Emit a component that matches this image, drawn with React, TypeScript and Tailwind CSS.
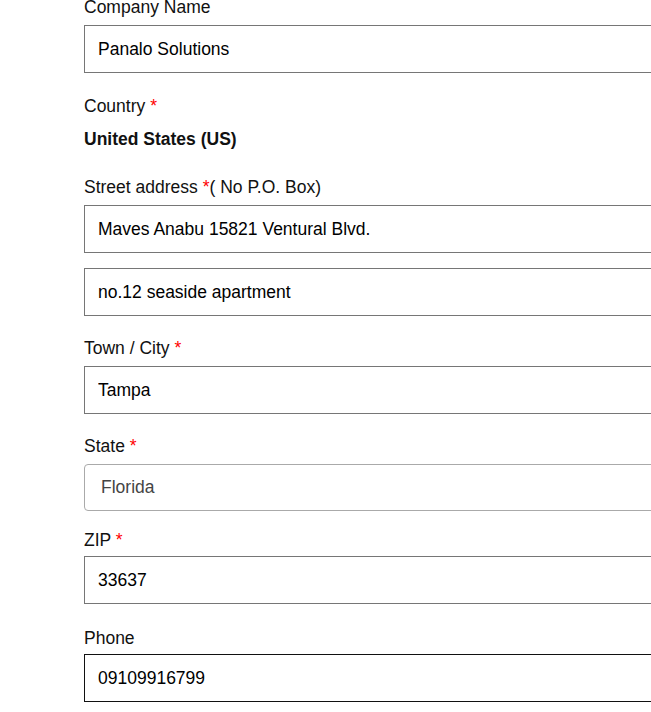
import React from "react";

function Req() {
  return <span className="text-[#ff0000]"> *</span>;
}

const inputBase =
  "block w-[640px] h-[48px] border px-[13px] text-[17.5px] text-black outline-none";

function Field({
  label,
  value,
  className = "",
  inputClass = "border-[#767676]",
}: {
  label: React.ReactNode;
  value: string;
  className?: string;
  inputClass?: string;
}) {
  return (
    <div className={className}>
      <label className="block leading-[20px] mb-[8px]">{label}</label>
      <input readOnly value={value} className={`${inputBase} ${inputClass}`} />
    </div>
  );
}

export default function App() {
  return (
    <div
      className="w-[651px] h-[712px] overflow-hidden bg-white text-[17.5px] text-[#111]"
      style={{ fontFamily: '"Liberation Sans", Arial, sans-serif' }}
    >
      <div className="pl-[84px] -mt-[3px]">
        <Field label="Company Name" value="Panalo Solutions" className="mb-[23px]" />

        <div className="leading-[20px] mb-[13px]">
          Country
          <Req />
        </div>
        <div className="leading-[20px] font-bold mb-[28px]">United States (US)</div>

        <div>
          <label className="block leading-[20px] mb-[8px]">
            Street address <span className="text-[#ff0000]">*</span>( No P.O. Box)
          </label>
          <input
            readOnly
            value="Maves Anabu 15821 Ventural Blvd."
            className={`${inputBase} border-[#767676] mb-[15px]`}
          />
          <input
            readOnly
            value="no.12 seaside apartment"
            className={`${inputBase} border-[#767676] mb-[22px]`}
          />
        </div>

        <Field
          label={
            <>
              Town / City
              <Req />
            </>
          }
          value="Tampa"
          className="mb-[22px]"
        />

        <div className="mb-[19px]">
          <label className="block leading-[20px] mb-[8px]">
            State
            <Req />
          </label>
          <select
            defaultValue="Florida"
            className="block w-[640px] h-[47px] appearance-none rounded-[4px] border border-[#aaaaaa] bg-white pl-[16px] text-[17.5px] text-[#444] outline-none"
          >
            <option>Florida</option>
          </select>
        </div>

        <div className="mb-[24px]">
          <label className="block leading-[20px] mb-[6px]">
            ZIP
            <Req />
          </label>
          <input readOnly value="33637" className={`${inputBase} border-[#767676]`} />
        </div>

        <div>
          <label className="block leading-[20px] mb-[6px]">Phone</label>
          <input readOnly value="09109916799" className={`${inputBase} border-[#111]`} />
        </div>
      </div>
    </div>
  );
}
